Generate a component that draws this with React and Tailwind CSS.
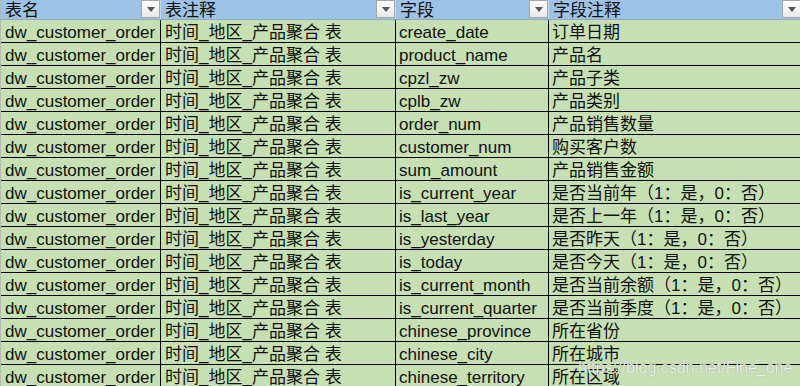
import React from 'react';

const ROWS = [
  ['create_date', '订单日期'],
  ['product_name', '产品名'],
  ['cpzl_zw', '产品子类'],
  ['cplb_zw', '产品类别'],
  ['order_num', '产品销售数量'],
  ['customer_num', '购买客户数'],
  ['sum_amount', '产品销售金额'],
  ['is_current_year', '是否当前年（1：是，0：否）'],
  ['is_last_year', '是否上一年（1：是，0：否）'],
  ['is_yesterday', '是否昨天（1：是，0：否）'],
  ['is_today', '是否今天（1：是，0：否）'],
  ['is_current_month', '是否当前余额（1：是，0：否）'],
  ['is_current_quarter', '是否当前季度（1：是，0：否）'],
  ['chinese_province', '所在省份'],
  ['chinese_city', '所在城市'],
  ['chinese_territory', '所在区域'],
];

const FONT = { fontFamily: '"Liberation Sans", "Noto Sans CJK SC", sans-serif' };

function FilterButton() {
  return (
    <div className="w-[19px] h-[18px] shrink-0 border border-[#a6a6a6] bg-gradient-to-b from-white to-[#e8e8e8] flex items-center justify-center">
      <svg width="8" height="5" viewBox="0 0 8 5">
        <path d="M0 0 L8 0 L4 5 Z" fill="#555" />
      </svg>
    </div>
  );
}

function HeaderCell({ label, className }) {
  return (
    <div className={`h-[19px] flex items-start justify-between pl-[4px] ${className}`}>
      <span className="text-[17px] leading-[19px] pt-[1px] text-[#111]">{label}</span>
      <FilterButton />
    </div>
  );
}

function Cell({ children, className }) {
  return (
    <div className={`h-[22px] pt-[3px] overflow-hidden whitespace-nowrap text-[17px] leading-[19px] text-[#111] ${className}`}>
      {children}
    </div>
  );
}

export default function App() {
  return (
    <div className="relative w-[800px] h-[386px] overflow-hidden bg-[#c6e0b4] border-l border-[#b8b8b8]" style={FONT}>
      {/* Header */}
      <div className="flex bg-[#9dc3e6] border-b border-[#8fa9bf]">
        <HeaderCell label="表名" className="w-[160px] border-r border-[#c7d6e6]" />
        <HeaderCell label="表注释" className="w-[235px] border-r border-[#c7d6e6]" />
        <HeaderCell label="字段" className="w-[153px] border-r border-[#c7d6e6]" />
        <HeaderCell label="字段注释" className="flex-1 -mr-[1px]" />
      </div>

      {/* Body */}
      {ROWS.map(([field, note]) => (
        <div key={field} className="flex border-b border-black">
          <Cell className="w-[160px] pl-[4px] border-r border-black">dw_customer_order</Cell>
          <Cell className="w-[235px] pl-[4px] border-r border-black">时间_地区_产品聚合 表</Cell>
          <Cell className="w-[153px] pl-[3px] border-r border-black">{field}</Cell>
          <Cell className="flex-1 pl-[3px]">{note}</Cell>
        </div>
      ))}

      {/* Watermark */}
      <div
        className="absolute left-[577px] top-[356px] text-[16px] text-white/85 [text-shadow:0_0_1px_rgba(0,0,0,0.4)]"
        style={{ fontFamily: '"Liberation Sans", Arial, sans-serif' }}
      >
        https://blog.csdn.net/Fine_one
      </div>
    </div>
  );
}
